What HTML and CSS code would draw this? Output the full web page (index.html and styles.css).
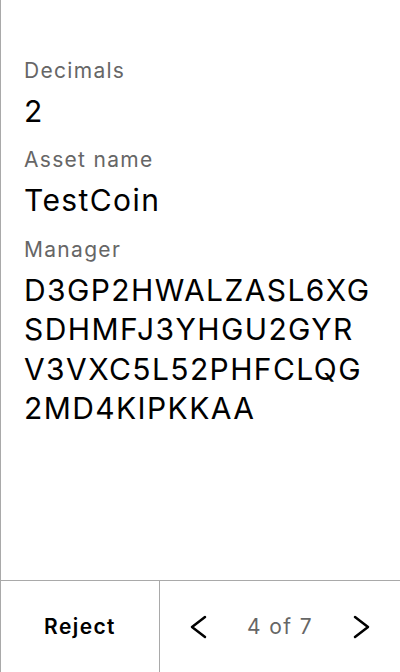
FILE: index.html
```html
<!DOCTYPE html>
<html lang="en">
<head>
<meta charset="utf-8">
<link rel="stylesheet" href="styles.css">
</head>
<body>
<div class="screen">
  <main class="content">
    <div class="field">
      <div class="label">Decimals</div>
      <div class="value">2</div>
    </div>
    <div class="field">
      <div class="label">Asset name</div>
      <div class="value">TestCoin</div>
    </div>
    <div class="field">
      <div class="label">Manager</div>
      <div class="value address">D3GP2HWALZASL6XGSDHMFJ3YHGU2GYRV3VXC5L52PHFCLQG2MD4KIPKKAA</div>
    </div>
  </main>
  <footer class="footer">
    <button class="reject">Reject</button>
    <div class="pager">
      <svg class="chev" width="24" height="24" viewBox="0 0 24 24"><polyline points="18,2 5,12 18,22" fill="none" stroke="#000" stroke-width="2.5" stroke-linecap="round" stroke-linejoin="round"/></svg>
      <span class="count">4 of 7</span>
      <svg class="chev" width="24" height="24" viewBox="0 0 24 24"><polyline points="6,2 19,12 6,22" fill="none" stroke="#000" stroke-width="2.5" stroke-linecap="round" stroke-linejoin="round"/></svg>
    </div>
  </footer>
</div>
</body>
</html>
```
FILE: styles.css
```css
* { box-sizing: border-box; }
html, body { margin: 0; padding: 0; background: #fff; }
body { font-family: Inter, "Noto Sans", sans-serif; color: #000; }
.screen {
  width: 400px;
  height: 672px;
  display: flex;
  flex-direction: column;
  border-left: 1px solid #a9a9a9;
}
.content {
  flex: 1;
  padding: 57px 27.5px 0 23px;
  display: flex;
  flex-direction: column;
  gap: 15px;
}
.field { display: flex; flex-direction: column; gap: 7px; }
.label {
  font-size: 21px;
  line-height: 28px;
  letter-spacing: 1.3px;
  color: #666;
}
.value {
  font-size: 30px;
  line-height: 39.4px;
  letter-spacing: 1.4px;
  color: #000;
}
.address { word-break: break-all; }
.footer {
  height: 92px;
  border-top: 1px solid #a9a9a9;
  display: grid;
  grid-template-columns: 159px 1fr;
}
.reject {
  border: 0;
  border-right: 1px solid #a9a9a9;
  background: none;
  font-family: inherit;
  font-size: 21px;
  font-weight: 600;
  letter-spacing: 1.4px;
  color: #000;
  padding: 0;
}
.pager {
  display: flex;
  align-items: center;
  justify-content: center;
  gap: 36px;
}
.count { font-size: 21px; letter-spacing: 1.4px; color: #666; }
.chev { display: block; width: 24px; height: 24px; }
```
